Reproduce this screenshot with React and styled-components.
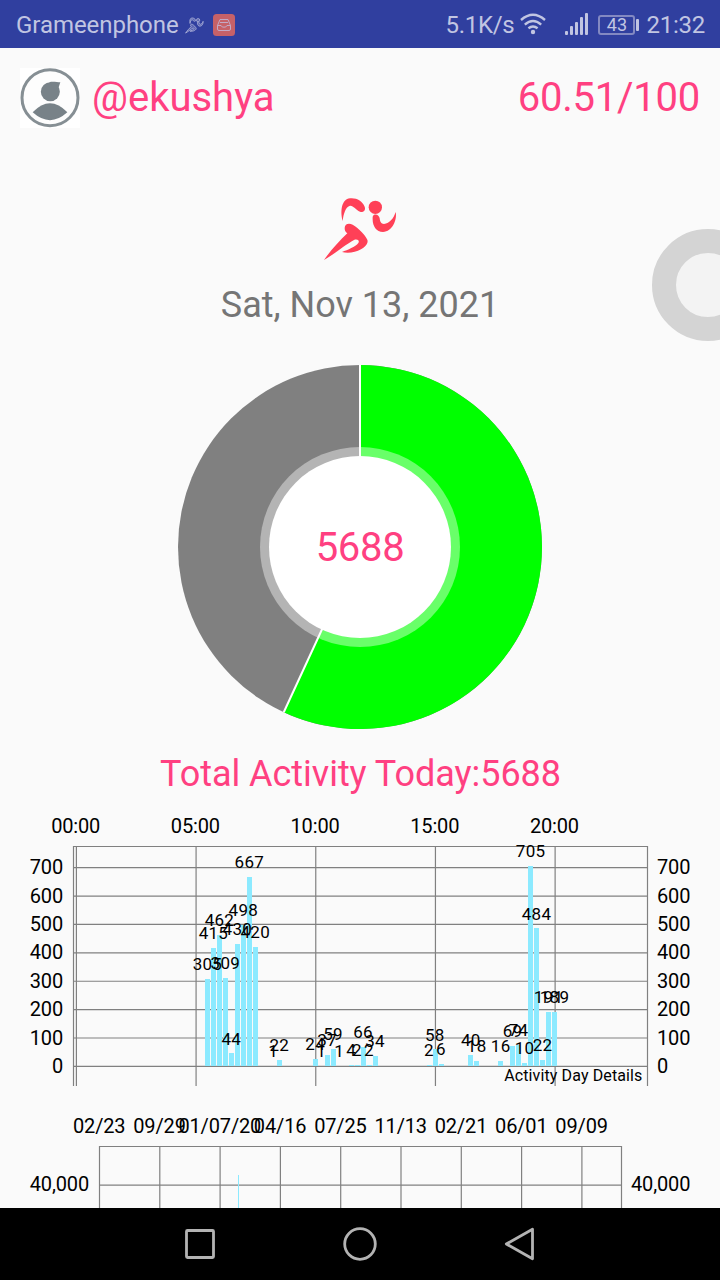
import React from 'react'
import styled, { createGlobalStyle } from 'styled-components';

const GlobalStyle = createGlobalStyle`
  body {
    margin: 0;
    background: #fafafa;
    font-family: Roboto, 'Noto Sans', sans-serif;
  }
`;

const PINK = '#ff4081';

// steps per 15 minute slot: [slot, steps]
const DAY_STEPS = [
  [22, 305], [23, 415], [24, 462], [25, 309], [26, 44], [27, 430], [28, 498], [29, 667], [30, 420],
  [33, 1], [34, 22], [40, 24], [41, 1], [42, 37], [43, 59], [44, 1], [46, 4], [47, 2], [48, 66],
  [49, 2], [50, 34], [59, 2], [60, 58], [61, 6], [66, 40], [67, 18], [71, 16], [73, 69], [74, 74],
  [75, 10], [76, 705], [77, 484], [78, 22], [79, 191], [80, 189],
];
const HOURS = ['00:00', '05:00', '10:00', '15:00', '20:00'];
const LEVELS = [0, 100, 200, 300, 400, 500, 600, 700];
const DATES = ['02/23', '09/29', '01/07/20', '04/16', '07/25', '11/13', '02/21', '06/01', '09/09'];

const GOAL = 10000;
const TOTAL = 5688;

const App = () => {
  return (
    <Screen>
      <GlobalStyle />
      <StatusBar>
        <StatusGroup>
          <Carrier>Grameenphone</Carrier>
          <SmallRunner viewBox="66 46 232 202">
            <RunnerShape />
          </SmallRunner>
          <InboxIcon />
        </StatusGroup>
        <StatusGroup>
          <Speed>5.1K/s</Speed>
          <WifiIcon />
          <SignalIcon />
          <Battery>43</Battery>
          <Clock>21:32</Clock>
        </StatusGroup>
      </StatusBar>

      <Content>
        <Header>
          <Avatar />
          <Handle>@ekushya</Handle>
          <Score>60.51/100</Score>
        </Header>
        <Runner viewBox="0 0 360 300">
          <RunnerShape />
        </Runner>
        <DateText>Sat, Nov 13, 2021</DateText>
        <Donut />
        <Total>Total Activity Today:{TOTAL}</Total>
        <DayChart />
        <HistoryChart />
      </Content>

      <NavBar>
        <NavIcon viewBox="0 0 36 36">
          <rect x="4.5" y="4.5" width="27" height="27" rx="1" />
        </NavIcon>
        <NavIcon viewBox="0 0 36 36">
          <circle cx="18" cy="18" r="15.3" />
        </NavIcon>
        <NavIcon viewBox="0 0 36 36">
          <path d="M4.3 18 L30.5 3.2 V32.8 Z" />
        </NavIcon>
      </NavBar>
      <AssistBall />
    </Screen>
  )
}

export default App

const RunnerShape = () => (
  <>
    <circle cx="226" cy="82" r="20" />
    <path d="M128 123 C120 92 125 58 150 55 C170 53 187 63 194 80 C198 91 190 98 180 95 C167 89 160 76 150 77 C137 80 131 100 128 123 Z" />
    <path d="M222 104 C231 101 238 107 239 115 C240 125 243 132 252 132 C269 130 281 115 287 96 C292 119 277 155 249 156 C229 156 218 137 218 119 C218 112 217 107 222 104 Z" />
    <path d="M134 144 C134 131 147 128 158 134 C177 145 196 166 202 179 C206 190 195 201 183 208 C167 217 144 221 126 216 C144 209 166 201 175 189 C180 181 171 176 162 180 C137 193 107 220 72 240 C91 212 117 184 142 160 C136 156 134 151 134 144 Z" />
  </>
)

const InboxIcon = () => (
  <InboxSvg viewBox="0 0 22 22">
    <rect width="22" height="22" rx="3.5" fill="#c66168" />
    <path d="M7 5.5 h8 l2.5 6 v3.5 q0 1.5 -1.5 1.5 h-10 q-1.5 0 -1.5 -1.5 v-3.5 Z M4.5 11.5 h3.5 c.5 2.2 5.5 2.2 6 0 h3.5 M7 8.5 h8" fill="none" stroke="#c3b1d0" strokeWidth="0.9" />
  </InboxSvg>
)

const WifiIcon = () => (
  <WifiSvg viewBox="0 0 26 22">
    <path d="M1 7 Q13 -3.4 25 7" />
    <path d="M4.8 11.6 Q13 4.6 21.2 11.6" />
    <path d="M8.4 15.2 Q13 11.6 17.6 15.2" />
    <circle cx="13" cy="19" r="2.2" />
  </WifiSvg>
)

const SignalIcon = () => (
  <SignalSvg viewBox="0 0 24 22">
    {[4, 9, 13, 18, 22].map((h, i) => (
      <rect key={h} x={i * 5} y={22 - h} width="3" height={h} rx="1" />
    ))}
  </SignalSvg>
)

const Avatar = () => (
  <AvatarSvg viewBox="0 0 180 180">
    <rect width="180" height="180" fill="#fff" />
    <circle cx="90" cy="89" r="84" fill="#fdfdfd" stroke="#868f94" strokeWidth="9" />
    <circle cx="91" cy="71" r="28.5" fill="#788288" />
    <path d="M88 42.5 C99 40 112 43 121 43 L116 58 L104 66 Z" fill="#788288" />
    <path d="M38 133 Q90 79 142 133 Q90 180 38 133 Z" fill="#788288" />
  </AvatarSvg>
)

const Donut = () => {
  const angle = (TOTAL / GOAL) * Math.PI * 2;
  const x = 182 + 182 * Math.sin(angle);
  const y = 182 - 182 * Math.cos(angle);
  return (
    <DonutSvg viewBox="0 0 364 364">
      <circle cx="182" cy="182" r="182" fill="#808080" />
      <path d={`M182 182 V0 A182 182 0 1 1 ${x} ${y} Z`} fill="#00ff00" />
      <path d={`M182 0 V182 L${x} ${y}`} fill="none" stroke="#fff" strokeWidth="2" />
      <circle cx="182" cy="182" r="100" fill="#fff" fillOpacity="0.412" />
      <circle cx="182" cy="182" r="91" fill="#fff" />
      <DonutText x="182" y="196">{TOTAL}</DonutText>
    </DonutSvg>
  )
}

const DayChart = () => {
  const slotX = (slot) => 76 + slot * 5.984;
  const levelY = (v) => 260.4 - v * 0.2839;
  const barTop = (v) => Math.floor(levelY(v));
  return (
    <ChartSvg height="304" viewBox="0 0 720 304">
      {HOURS.map((h, i) => (
        <g key={h}>
          <AxisText x={slotX(i * 20) - 0.3} y="27.3" $anchor="middle">{h}</AxisText>
          <GridLine x1={slotX(i * 20) + 0.4} x2={slotX(i * 20) + 0.4} y1="41" y2="280" />
        </g>
      ))}
      {LEVELS.map((v) => (
        <g key={v}>
          <AxisText x="63" y={levelY(v) + 6.6} $anchor="end">{v}</AxisText>
          <AxisText x="657" y={levelY(v) + 6.6}>{v}</AxisText>
          <GridLine x1="73" x2="648" y1={levelY(v)} y2={levelY(v)} />
        </g>
      ))}
      <GridLine x1="73" x2="648" y1="40.5" y2="40.5" />
      <GridLine x1="73.5" x2="73.5" y1="40" y2="280" />
      <GridLine x1="647.5" x2="647.5" y1="40" y2="280" />
      {DAY_STEPS.map(([slot, v]) => (
        <Bar key={slot} x={slotX(slot) - 2.5} y={barTop(v)} width="5" height={260 - barTop(v)} />
      ))}
      {DAY_STEPS.map(([slot, v]) => (
        <ValueText key={slot} x={slotX(slot) - 0.2} y={levelY(v) - 9.4}>{v}</ValueText>
      ))}
      <Caption x="642.5" y="275.3">Activity Day Details</Caption>
    </ChartSvg>
  )
}

const HistoryChart = () => (
  <ChartSvg height="98" viewBox="0 0 720 98">
    {DATES.map((d, i) => (
      <g key={d}>
        <AxisText x={99.2 + i * 60.3} y="23.3" $anchor="middle">{d}</AxisText>
        <GridLine x1={99.5 + i * 60.3} x2={99.5 + i * 60.3} y1="36" y2="98" />
      </g>
    ))}
    <GridLine x1="99" x2="622" y1="36.5" y2="36.5" />
    <GridLine x1="99" x2="622" y1="75.2" y2="75.2" />
    <GridLine x1="621.5" x2="621.5" y1="36" y2="98" />
    <AxisText x="89" y="81.3" $anchor="end">40,000</AxisText>
    <AxisText x="631" y="81.3">40,000</AxisText>
    <Bar x="238" y="65" width="1" height="33" />
  </ChartSvg>
)

const Screen = styled.div`
  position: relative;
  width: 720px;
  height: 1280px;
  display: flex;
  flex-direction: column;
  overflow: hidden;
  background: #fafafa;
`;

const StatusBar = styled.div`
  flex: none;
  height: 48px;
  box-sizing: border-box;
  padding: 0 15px 0 16px;
  display: flex;
  align-items: center;
  justify-content: space-between;
  background: #303f9f;
  color: #c1c5e2;
  font-size: 24px;
`;

const StatusGroup = styled.div`
  display: flex;
  align-items: center;
`;

const StatusText = styled.span`
  line-height: 28px;
  padding-top: 2px;
  white-space: nowrap;
`;

const Carrier = styled(StatusText)`
  width: 163px;
  letter-spacing: -0.05px;
`;

const Speed = styled(StatusText)`
  width: 75px;
  letter-spacing: -0.3px;
`;

const Clock = styled(StatusText)`
  margin-left: 7px;
  letter-spacing: -0.25px;
`;

const SmallRunner = styled.svg`
  width: 19px;
  height: 17px;
  margin: 2px 0 0 6px;
  fill: #5b66b3;
  stroke: #c1c5e2;
  stroke-width: 8;
`;

const InboxSvg = styled.svg`
  width: 22px;
  height: 22px;
  margin: 2px 0 0 9px;
`;

const WifiSvg = styled.svg`
  width: 26px;
  height: 22px;
  fill: none;
  stroke: #c1c5e2;
  stroke-width: 2.4;

  circle {
    fill: #c1c5e2;
    stroke: none;
  }
`;

const SignalSvg = styled.svg`
  width: 24px;
  height: 22px;
  margin-left: 19px;
  fill: #c1c5e2;
`;

const Battery = styled.div`
  box-sizing: border-box;
  width: 37px;
  height: 20px;
  margin: 2px 4px 0 9px;
  border: 2px solid #8389c2;
  border-radius: 3px;
  display: flex;
  align-items: center;
  justify-content: center;
  font-size: 18px;
  line-height: 16px;
  position: relative;

  &::after {
    content: '';
    position: absolute;
    right: -6px;
    top: 2px;
    width: 3px;
    height: 12px;
    border-radius: 1px;
    background: #c1c5e2;
  }
`;

const Content = styled.div`
  flex: 1;
  min-height: 0;
  overflow: hidden;
  display: flex;
  flex-direction: column;
  align-items: center;
`;

const Header = styled.div`
  flex: none;
  align-self: stretch;
  height: 60px;
  padding: 20px;
  display: flex;
  align-items: center;
  color: ${PINK};
  font-size: 40px;
`;

const AvatarSvg = styled.svg`
  width: 60px;
  height: 60px;
`;

const Handle = styled.span`
  margin-left: 12px;
  line-height: 48px;
`;

const Score = styled.span`
  margin-left: auto;
  line-height: 48px;
  letter-spacing: -0.25px;
`;

const Runner = styled.svg`
  flex: none;
  width: 120px;
  height: 100px;
  margin-top: 32px;
  fill: #ff4057;
`;

const DateText = styled.div`
  flex: none;
  height: 48px;
  margin-top: 1px;
  line-height: 48px;
  color: #757575;
  font-size: 36px;
`;

const DonutSvg = styled.svg`
  flex: none;
  width: 364px;
  height: 364px;
  margin-top: 36px;
`;

const DonutText = styled.text`
  fill: ${PINK};
  font-size: 40px;
  letter-spacing: -0.3px;
  text-anchor: middle;
`;

const Total = styled.div`
  flex: none;
  height: 48px;
  margin: 21px 0 8px 1px;
  line-height: 48px;
  letter-spacing: -0.04px;
  color: ${PINK};
  font-size: 36px;
`;

const ChartSvg = styled.svg`
  flex: none;
  display: block;
  width: 720px;
`;

const AxisText = styled.text`
  fill: #000;
  font-size: 20px;
  letter-spacing: -0.15px;
  text-anchor: ${(props) => props.$anchor || 'start'};
`;

const ValueText = styled.text`
  fill: #000;
  font-size: 17px;
  letter-spacing: 0.3px;
  text-anchor: middle;
`;

const Caption = styled.text`
  fill: #000;
  font-size: 16px;
  letter-spacing: 0.12px;
  text-anchor: end;
`;

const GridLine = styled.line`
  stroke: #808080;
  stroke-width: 1.2;
`;

const Bar = styled.rect`
  fill: #8ceaff;
  shape-rendering: crispEdges;
`;

const NavBar = styled.div`
  flex: none;
  height: 72px;
  display: flex;
  align-items: center;
  justify-content: center;
  gap: 124px;
  background: #000;
`;

const NavIcon = styled.svg`
  width: 36px;
  height: 36px;
  fill: none;
  stroke: #b3b3b3;
  stroke-width: 2.8;
  stroke-linejoin: round;
`;

// floating assist button, half off the right edge
const AssistBall = styled.div`
  position: absolute;
  box-sizing: border-box;
  left: 652px;
  top: 229px;
  width: 112px;
  height: 112px;
  border: 24px solid #d4d4d4;
  border-radius: 50%;
  background: #f3f3f3;
`;
